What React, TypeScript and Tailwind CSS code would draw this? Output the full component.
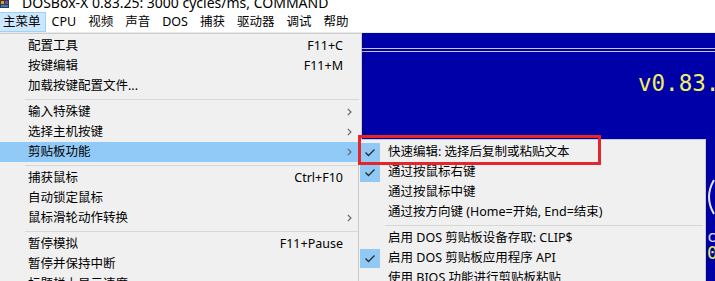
import React from 'react'

const MENU_BAR = ['CPU', '视频', '声音', 'DOS', '捕获', '驱动器', '调试', '帮助']

type Entry =
  | { sep: true }
  | { sep?: false; label: string; key?: string; sub?: boolean; hl?: boolean; checked?: boolean }

const MAIN_ITEMS: Entry[] = [
  { label: '配置工具', key: 'F11+C' },
  { label: '按键编辑', key: 'F11+M' },
  { label: '加载按键配置文件...' },
  { sep: true },
  { label: '输入特殊键', sub: true },
  { label: '选择主机按键', sub: true },
  { label: '剪贴板功能', sub: true, hl: true },
  { sep: true },
  { label: '捕获鼠标', key: 'Ctrl+F10' },
  { label: '自动锁定鼠标' },
  { label: '鼠标滑轮动作转换', sub: true },
  { sep: true },
  { label: '暂停模拟', key: 'F11+Pause' },
  { label: '暂停并保持中断' },
  { label: '标题栏上显示速度' },
]

const CLIP_ITEMS: Entry[] = [
  { label: '快速编辑: 选择后复制或粘贴文本', checked: true },
  { label: '通过按鼠标右键', checked: true },
  { label: '通过按鼠标中键' },
  { label: '通过按方向键 (Home=开始, End=结束)' },
  { sep: true },
  { label: '启用 DOS 剪贴板设备存取: CLIP$' },
  { label: '启用 DOS 剪贴板应用程序 API', checked: true },
  { label: '使用 BIOS 功能进行剪贴板粘贴' },
]

const Chevron = () => (
  <svg width="5" height="8" viewBox="0 0 5 8">
    <polyline points="0.8,0.8 4,4 0.8,7.2" fill="none" stroke="#606060" strokeWidth="1.1" />
  </svg>
)

const Check = () => (
  <svg width="20" height="19" viewBox="0 0 20 19">
    <polyline points="5.5,9.5 8.5,12.5 14.5,6.5" fill="none" stroke="#2b2b2b" strokeWidth="1.3" />
  </svg>
)

const AppIcon = () => (
  <svg width="9" height="8" viewBox="0 0 9 8">
    <rect x="0" y="0" width="9" height="8" fill="#3a3a3a" />
    <rect x="1" y="1" width="3" height="3" fill="#d8a020" />
    <rect x="5" y="1" width="3" height="3" fill="#6a4bb0" />
    <rect x="1" y="5" width="7" height="2" fill="#2d7fd0" />
  </svg>
)

export default function App() {
  return (
    <div className="relative w-[715px] h-[281px] overflow-hidden bg-white text-black font-['Noto_Sans','Noto_Sans_CJK_SC',sans-serif]">
      {/* title bar, top half cut off */}
      <div className="h-[12px] overflow-hidden flex items-start">
        <div className="w-[22px]">
          <AppIcon />
        </div>
        <div className="mt-[-4px] text-[14px] leading-[14px] whitespace-nowrap">
          DOSBox-X 0.83.25: 3000 cycles/ms, COMMAND
        </div>
      </div>

      {/* menu bar */}
      <div className="h-[21px] flex items-stretch text-[12.5px] border-b border-[#ececec]">
        <div className="pl-[3px] pr-[4px] flex items-center bg-[#cce8ff] border border-[#99d1ff] border-l-0">
          主菜单
        </div>
        {MENU_BAR.map(m => (
          <div key={m} className="px-[6px] flex items-center">
            {m}
          </div>
        ))}
      </div>

      {/* DOS screen */}
      <div className="relative h-[248px] bg-[#0000a8] pt-[15px] overflow-hidden">
        <div className="h-px bg-[#c8c8ec]" />
        <div className="h-px bg-[#c8c8ec] mt-[2px]" />
        <div className="mt-[20px] pl-[638px] whitespace-nowrap font-['DejaVu_Sans_Mono',monospace] text-[22.5px] leading-none text-[#f0f060]">
          v0.83.25
        </div>
        <svg className="absolute left-[700px] top-[146px]" width="15" height="36" viewBox="0 0 15 36">
          <path d="M14 1 Q 4 18 14 35" fill="none" stroke="#e8e8f8" strokeWidth="2" />
        </svg>
        <div className="absolute left-[707px] top-[196px] font-['DejaVu_Sans_Mono',monospace] text-[16px] leading-none text-[#e0e0f0]">
          c
        </div>
        <div className="absolute left-[707px] top-[211px] font-['DejaVu_Sans_Mono',monospace] text-[18px] leading-none text-[#f0f060]">
          0
        </div>
      </div>

      {/* main dropdown */}
      <div className="absolute left-[-3px] top-[33px] w-[365px] h-[270px] bg-[#f0f0f0] border border-[#cccccc] pt-[2px] text-[12.5px] shadow-[2px_2px_3px_rgba(0,0,0,0.15)]">
        {MAIN_ITEMS.map((it, i) =>
          it.sep ? (
            <div key={i} className="h-[6px] flex items-center">
              <div className="h-px flex-1 bg-[#d7d7d7] ml-[27px] mr-[2px]" />
            </div>
          ) : (
            <div
              key={i}
              className={`mx-[2px] h-[20px] flex items-center whitespace-nowrap ${it.hl ? 'bg-[#91c9f7]' : ''}`}
            >
              <span className="pl-[28px] flex-1">{it.label}</span>
              <span>{it.key}</span>
              <span className="w-[16px] pl-[4px] flex items-center">{it.sub && <Chevron />}</span>
            </div>
          )
        )}
      </div>

      {/* clipboard submenu */}
      <div className="absolute left-[358px] top-[139px] w-[348px] h-[160px] bg-[#f0f0f0] border border-[#cccccc] pt-[2px] text-[12.5px] shadow-[2px_2px_3px_rgba(0,0,0,0.15)]">
        {CLIP_ITEMS.map((it, i) =>
          it.sep ? (
            <div key={i} className="h-[6px] flex items-center">
              <div className="h-px flex-1 bg-[#d7d7d7] ml-[26px] mr-[2px]" />
            </div>
          ) : (
            <div key={i} className="h-[20px] flex items-center whitespace-nowrap">
              <span className={`ml-[1px] w-[20px] h-[19px] ${it.checked ? 'bg-[#90c8f6]' : ''}`}>
                {it.checked && <Check />}
              </span>
              <span className="ml-[8px]">{it.label}</span>
            </div>
          )
        )}
      </div>

      {/* red highlight box */}
      <div className="absolute left-[358px] top-[135px] w-[243px] h-[30px] border-[3px] border-[#e8242b]" />
    </div>
  )
}
